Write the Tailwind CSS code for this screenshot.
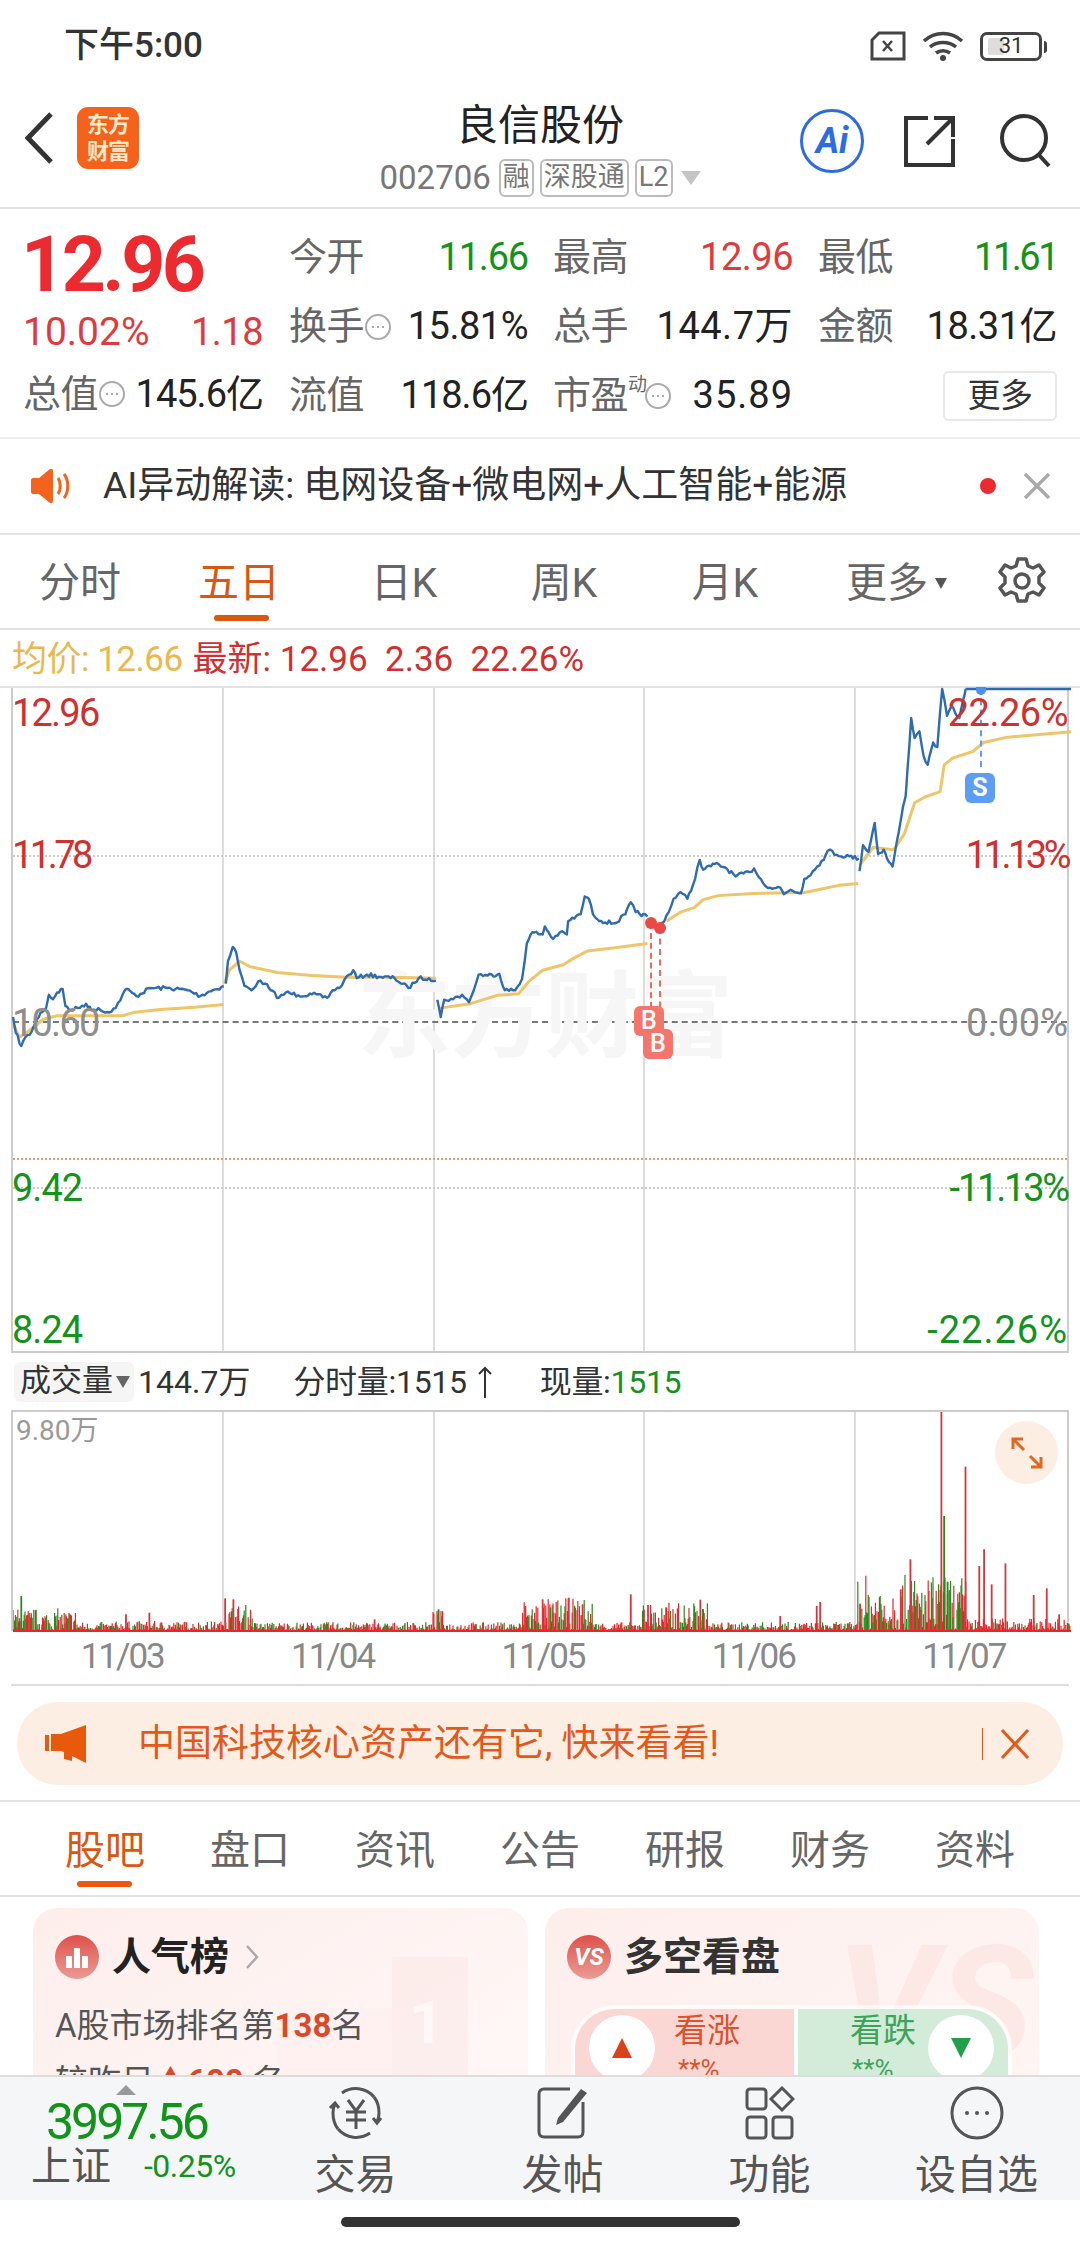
<!DOCTYPE html>
<html lang="zh-CN">
<head>
<meta charset="UTF-8">
<title>良信股份</title>
<script src="https://cdn.jsdelivr.net/npm/@tailwindcss/browser@4"></script>
</head>
<body class="bg-white">
<div class="w-[1080px] h-[2244px] overflow-hidden flex flex-col bg-white text-[#222] font-[Roboto,'Noto_Sans_CJK_SC',sans-serif]">

  <!-- status bar -->
  <div class="h-[92px] shrink-0 flex items-center justify-between pl-[64px] pr-[38px]">
    <span class="text-[35px] font-medium text-[#333]">下午5:00</span>
    <div class="flex items-center gap-[16px]">
      <svg width="36" height="30" viewBox="0 0 36 30" fill="none" stroke="#444" stroke-width="3"><path d="M9 2h25v26H2V9z"/><path d="M13 10l9 10M22 10l-9 10" stroke-width="2.5"/></svg>
      <svg width="42" height="32" viewBox="0 0 42 32" fill="none" stroke="#444" stroke-width="3.5"><path d="M2 11c11-10 27-10 38 0M8 17c7-6 19-6 26 0M14 23c4-3 10-3 14 0"/><circle cx="21" cy="28" r="3" fill="#444" stroke="none"/></svg>
      <div class="relative w-[62px] h-[29px] rounded-[7px] border-[3px] border-[#444] flex items-center justify-center text-[22px] leading-none text-[#333]">
        <span class="absolute left-[5px] top-[3px] bottom-[3px] w-[16px] bg-[#ddd] rounded-[2px]"></span>
        <span class="relative">31</span>
        <span class="absolute -right-[8px] top-[6px] w-[3px] h-[12px] bg-[#444] rounded-r-sm"></span>
      </div>
    </div>
  </div>

  <!-- header -->
  <div class="h-[117px] shrink-0 grid grid-cols-[1fr_auto_1fr] border-b-2 border-[#e2e2e2]">
    <div class="flex items-center pl-[25px] pb-[24px] gap-[24px]">
      <svg width="28" height="52" viewBox="0 0 28 52" fill="none" stroke="#333" stroke-width="5"><path d="M26 2L3 26l23 24"/></svg>
      <div class="w-[62px] h-[62px] rounded-[11px] bg-[#f4621c] flex flex-col items-center justify-center text-[#ffe9c9] text-[22px] leading-[27px] font-bold tracking-[-1px]"><span>东方</span><span>财富</span></div>
    </div>
    <div class="flex flex-col items-center pt-[8px]">
      <div class="text-[42px] leading-[52px] text-[#222]">良信股份</div>
      <div class="flex items-center text-[#777] mt-[7px]">
        <span class="text-[33px] leading-[38px]">002706</span>
        <span class="ml-[8px] h-[38px] px-[2px] border-2 border-[#bbb] rounded-[6px] text-[27px] leading-[32px]">融</span>
        <span class="ml-[6px] h-[38px] px-[2px] border-2 border-[#bbb] rounded-[6px] text-[27px] leading-[32px]">深股通</span>
        <span class="ml-[6px] h-[38px] px-[2px] border-2 border-[#bbb] rounded-[6px] text-[27px] leading-[32px]">L2</span>
        <svg class="ml-[8px]" width="20" height="14" viewBox="0 0 20 14"><path d="M0 0h20L10 14z" fill="#c4c4c4"/></svg>
      </div>
    </div>
    <div class="flex items-center justify-end pr-[28px] pb-[18px]">
      <div class="w-[64px] h-[64px] rounded-full border-[3px] border-[#2d6be4] flex items-center justify-center text-[#2d6be4] text-[36px] font-bold italic leading-none">Ai</div>
      <svg class="ml-[40px]" width="52" height="52" viewBox="0 0 52 52" fill="none" stroke="#333" stroke-width="4"><path d="M24 3H2v47h47V24"/><path d="M23 29L49 3M30 3h19v19" /></svg>
      <svg class="ml-[44px]" width="52" height="54" viewBox="0 0 52 54" fill="none" stroke="#333" stroke-width="4"><circle cx="24" cy="24" r="22"/><path d="M39 41l10 11"/></svg>
    </div>
  </div>

  <!-- quote -->
  <div class="h-[230px] shrink-0 border-b-2 border-[#eee] flex pl-[23px] pt-[14px] text-[38px] tracking-[-0.5px]">
    <div class="w-[240px] shrink-0 flex flex-col">
      <div class="h-[70px] text-[77px] leading-[70px] font-bold text-[#ec2b30] tracking-[-3.5px] mt-[7px] -mb-[7px] -ml-[2px]">12.96</div>
      <div class="h-[70px] flex justify-between items-end pb-[2px] text-[#e23a3c]"><span class="text-[39px] tracking-[0px]">10.02%</span><span>1.18</span></div>
      <div class="h-[60px] flex items-center justify-between pt-[2px]">
        <span class="flex items-center text-[#666]">总值<svg class="ml-[1px]" width="26" height="26" viewBox="0 0 26 26" fill="none" stroke="#aaa" stroke-width="2"><circle cx="13" cy="13" r="12"/><path d="M7 13h2M12 13h2M17 13h2"/></svg></span><span class="tracking-[-1px]">145.6亿</span>
      </div>
    </div>
    <div class="ml-[26px] w-[768px] grid grid-cols-[239px_240px_239px] gap-x-[25px] grid-rows-[69px_69px_69px]">
      <div class="flex items-center justify-between"><span class="text-[#666]">今开</span><span class="text-[#12931a] tracking-[-1.2px]">11.66</span></div>
      <div class="flex items-center justify-between"><span class="text-[#666]">最高</span><span class="text-[#e23a3c]">12.96</span></div>
      <div class="flex items-center justify-between"><span class="text-[#666]">最低</span><span class="text-[#12931a] tracking-[-2.5px]">11.61</span></div>
      <div class="flex items-center justify-between"><span class="flex items-center text-[#666]">换手<svg class="ml-[1px]" width="26" height="26" viewBox="0 0 26 26" fill="none" stroke="#aaa" stroke-width="2"><circle cx="13" cy="13" r="12"/><path d="M7 13h2M12 13h2M17 13h2"/></svg></span><span>15.81%</span></div>
      <div class="flex items-center justify-between"><span class="text-[#666]">总手</span><span class="tracking-[0.5px]">144.7万</span></div>
      <div class="flex items-center justify-between"><span class="text-[#666]">金额</span><span>18.31亿</span></div>
      <div class="flex items-center justify-between"><span class="text-[#666]">流值</span><span class="tracking-[-1px]">118.6亿</span></div>
      <div class="flex items-center justify-between"><span class="flex items-center text-[#666]">市盈<span class="text-[19px] leading-none self-start mt-[8px]">动</span><svg class="-ml-[2px]" width="26" height="26" viewBox="0 0 26 26" fill="none" stroke="#aaa" stroke-width="2"><circle cx="13" cy="13" r="12"/><path d="M7 13h2M12 13h2M17 13h2"/></svg></span><span class="tracking-[1px]">35.89</span></div>
      <div class="flex items-center justify-end"><button class="w-[114px] h-[50px] border-2 border-[#e8e8e8] rounded-[6px] text-[33px] leading-none text-[#333]">更多</button></div>
    </div>
  </div>

  <!-- AI notice -->
  <div class="h-[96px] shrink-0 border-b-2 border-[#e2e2e2] flex items-center pl-[31px] pr-[29px]">
    <svg width="42" height="34" viewBox="0 0 42 34"><path d="M0 11c0-1 1-2 2-2h6L19 0c1-1 3 0 3 2v30c0 2-2 3-3 2L8 25H2c-1 0-2-1-2-2z" fill="#f4621c"/><path d="M27 9c3 4 3 12 0 16M33 5c5 6 5 18 0 24" fill="none" stroke="#f4621c" stroke-width="3"/></svg>
    <span class="ml-[30px] text-[37px] text-[#333]">AI异动解读: 电网设备+微电网+人工智能+能源</span>
    <span class="ml-auto w-[16px] h-[16px] rounded-full bg-[#ec2b30]"></span>
    <svg class="ml-[27px]" width="28" height="28" viewBox="0 0 28 28" stroke="#aaa" stroke-width="3.5"><path d="M2 2l24 24M26 2L2 26"/></svg>
  </div>

  <!-- period tabs -->
  <div class="h-[95px] shrink-0 border-b-2 border-[#e2e2e2] flex text-[41px] text-[#666] leading-none">
    <div class="w-[160px] flex items-center justify-center pt-[3px]">分时</div>
    <div class="relative w-[158px] flex items-center justify-center pt-[3px] text-[#d9570f]">五日<span class="absolute bottom-[7px] left-[54px] w-[55px] h-[6px] rounded-full bg-[#d9570f]"></span></div>
    <div class="w-[172px] flex items-center justify-center pt-[3px]">日K</div>
    <div class="w-[148px] flex items-center justify-center pt-[3px]">周K</div>
    <div class="w-[174px] flex items-center justify-center pt-[3px]">月K</div>
    <div class="w-[159px] flex items-center pl-[34px] pt-[3px]">更多<svg class="ml-[7px]" width="12" height="12" viewBox="0 0 12 12"><path d="M0 1h12L6 12z" fill="#555"/></svg></div>
    <div class="flex items-center pl-[26px] pb-[2px]">
      <svg width="50" height="50" viewBox="0 0 50 50" fill="none" stroke="#555" stroke-width="3.5" stroke-linejoin="round"><path d="M21 3h8l2 7 5 2 6-3 5 7-5 5v6l5 5-5 7-6-3-5 2-2 7h-8l-2-7-5-2-6 3-5-7 5-5v-6l-5-5 5-7 6 3 5-2z"/><circle cx="25" cy="25" r="7"/></svg>
    </div>
  </div>

  <!-- legend line -->
  <div class="h-[58px] shrink-0 border-b-2 border-[#e2e2e2] flex items-center pl-[12px] pt-[4px] text-[35px] whitespace-pre">
    <span class="text-[#eab84f] tracking-[-0.5px]">均价: 12.66</span><span class="ml-[10px] text-[#d0302f]">最新: 12.96  2.36  22.26%</span>
  </div>

  <!-- price chart -->
  <div class="relative h-[665px] shrink-0 mx-[11px] border-x-2 border-b-2 border-[#ccc]">
    <div class="absolute inset-0 grid grid-cols-5 divide-x-2 divide-[#ddd]"><div></div><div></div><div></div><div></div><div></div></div>
    <div class="absolute left-0 right-0 top-[167px] border-t-2 border-dotted border-[#ccc]"></div>
    <div class="absolute left-0 right-0 top-[333px] border-t-2 border-dashed border-[#777]"></div>
    <div class="absolute left-0 right-0 top-[470px] border-t-2 border-dotted border-[#e79b6c]"></div>
    <div class="absolute left-0 right-0 top-[499px] border-t-2 border-dotted border-[#ccc]"></div>
    <div class="absolute left-[344px] top-[275px] text-[94px] leading-[110px] font-bold text-[#f6f6f6] whitespace-nowrap">东方财富</div>
    <svg class="absolute -left-[11px] -top-[8px] w-[1080px] h-[700px]" viewBox="0 0 1568 1568" preserveAspectRatio="none" fill="none" stroke-linejoin="round">
      <g stroke="#f0c468" stroke-width="3">
        <polyline vector-effect="non-scaling-stroke" points="16,770 25,800 40,785 60,760 80,752 120,752 175,752 190,745 230,738 280,733 322,727"/>
        <polyline vector-effect="non-scaling-stroke" points="323,680 330,650 345,630 360,642 400,655 450,662 500,666 560,666 630,668"/>
        <polyline vector-effect="non-scaling-stroke" points="635,735 680,725 720,706 750,703 765,675 785,650 815,638 830,623 850,607 890,600 937,590"/>
        <polyline vector-effect="non-scaling-stroke" points="965,540 985,520 1005,510 1018,492 1040,483 1090,478 1165,476 1190,468 1215,460 1243,456"/>
        <polyline vector-effect="non-scaling-stroke" points="1245,415 1265,375 1295,380 1310,345 1325,275 1340,262 1362,250 1368,190 1380,175 1410,160 1425,140 1460,128 1552,116"/>
      </g>
      <g id="price" stroke="#2f6bb0" stroke-width="2.4">
        <polyline vector-effect="non-scaling-stroke" points="16,755 20,790 28,820 34,800 40,795 48,770 56,745 64,735 68,705 74,715 80,700 88,692 92,730 100,740 110,735 122,725 130,740 140,735 150,745 165,735 175,705 180,692 195,708 215,690 240,690 270,695 288,708 300,698 322,686"/>
        <polyline vector-effect="non-scaling-stroke" points="325,680 328,630 335,598 340,610 345,650 352,685 362,695 372,675 382,680 390,695 402,712 412,700 430,706 450,704 472,712 480,695 490,690 497,672 510,650 515,668 530,660 550,665 570,668 590,690 605,668 620,668 630,674"/>
        <polyline vector-effect="non-scaling-stroke" points="632,716 637,755 642,716 655,715 668,705 678,722 688,680 692,660 705,662 722,658 730,695 745,695 755,670 762,590 770,565 785,570 788,552 800,580 810,565 820,570 822,540 840,525 846,485 852,490 858,525 870,540 890,545 905,525 913,498 920,520 937,530"/>
        <polyline vector-effect="non-scaling-stroke" points="940,545 948,555 958,545 968,520 975,490 985,475 995,490 1003,460 1013,403 1018,425 1035,412 1050,420 1065,440 1085,430 1092,422 1105,455 1115,465 1130,465 1135,480 1145,470 1160,478 1165,445 1180,425 1190,405 1202,380 1212,392 1230,395 1244,400"/>
        <polyline vector-effect="non-scaling-stroke" points="1245,428 1250,370 1258,385 1267,320 1272,390 1280,380 1285,400 1293,418 1302,340 1308,285 1312,260 1320,85 1325,130 1332,115 1338,170 1344,190 1352,140 1358,150 1365,20 1372,80 1378,60 1390,85 1398,30 1399,20"/>
        <polyline vector-effect="non-scaling-stroke" points="1399,20 1552,20"/>
      </g>
    </svg>
    <!-- buy and sell marks -->
    <span class="absolute left-[637px] top-[235px] h-[85px] border-l-2 border-dashed border-[#f4655c]"></span>
    <span class="absolute left-[646px] top-[240px] h-[90px] border-l-2 border-dashed border-[#f4655c]"></span>
    <span class="absolute left-[632px] top-[229px] w-[12px] h-[12px] rounded-full bg-[#ea4a45]"></span>
    <span class="absolute left-[641px] top-[234px] w-[12px] h-[12px] rounded-full bg-[#ea4a45]"></span>
    <span class="absolute left-[621px] top-[318px] w-[30px] h-[30px] rounded-[6px] bg-[#f4756c] text-white text-[25px] leading-[30px] text-center font-medium">B</span>
    <span class="absolute left-[630px] top-[341px] w-[30px] h-[30px] rounded-[6px] bg-[#f4756c] text-white text-[25px] leading-[30px] text-center font-medium">B</span>
    <span class="absolute left-[967px] top-[1px] h-[78px] border-l-2 border-dashed border-[#5d9ef5]"></span>
    <span class="absolute left-[963px] -top-[1px] w-[10px] h-[8px] rounded-b-full bg-[#4b8fe8]"></span>
    <span class="absolute left-[952px] top-[85px] w-[30px] h-[30px] rounded-[6px] bg-[#5d9ef5] text-white text-[25px] leading-[30px] text-center font-bold">S</span>
    <!-- axis labels -->
    <span class="absolute -left-[1px] top-[5px] text-[38px] leading-[40px] tracking-[-1.8px] text-[#d0302f]">12.96</span>
    <span class="absolute -left-[1px] top-[147px] text-[38px] leading-[40px] tracking-[-3.5px] text-[#d0302f]">11.78</span>
    <span class="absolute -left-[1px] top-[315px] text-[38px] leading-[40px] tracking-[-1.8px] text-[#8e8e8e]">10.60</span>
    <span class="absolute -left-[1px] top-[480px] text-[38px] leading-[40px] tracking-[-1px] text-[#12931a]">9.42</span>
    <span class="absolute -left-[1px] top-[622px] text-[38px] leading-[40px] tracking-[-1px] text-[#12931a]">8.24</span>
    <span class="absolute -right-[1px] top-[5px] text-[38px] leading-[40px] tracking-[-0.5px] text-[#d0302f]">22.26%</span>
    <span class="absolute -right-[1px] top-[147px] text-[38px] leading-[40px] tracking-[-3.5px] text-[#d0302f]">11.13%</span>
    <span class="absolute -right-[1px] top-[315px] text-[38px] leading-[40px] text-[#8e8e8e]">0.00%</span>
    <span class="absolute -right-[1px] top-[480px] text-[38px] leading-[40px] tracking-[-2.2px] text-[#12931a]">-11.13%</span>
    <span class="absolute -right-[1px] top-[622px] text-[38px] leading-[40px] tracking-[1px] text-[#12931a]">-22.26%</span>
  </div>

  <!-- volume header -->
  <div class="h-[57px] shrink-0 flex items-center pl-[14px] text-[32px] text-[#333]">
    <div class="w-[120px] h-[40px] rounded-[6px] bg-[#f5f5f5] flex items-center pl-[6px] text-[31px]">成交量<svg class="ml-[3px]" width="14" height="12" viewBox="0 0 14 12"><path d="M0 0h14L7 12z" fill="#666"/></svg></div>
    <span class="ml-[4px]">144.7万</span>
    <span class="ml-[43px] tracking-[-0.3px]">分时量:1515</span>
    <svg class="ml-[10px]" width="16" height="32" viewBox="0 0 16 32" fill="none" stroke="#333" stroke-width="2"><path d="M8 32V2M2 8l6-6 6 6"/></svg>
    <span class="ml-[47px] tracking-[-0.3px]">现量:<span class="text-[#12931a]">1515</span></span>
  </div>

  <!-- volume chart -->
  <div class="relative h-[221px] shrink-0 mx-[11px] border-x-2 border-t-2 border-[#ccc]">
    <div class="absolute inset-0 grid grid-cols-5 divide-x-2 divide-[#ddd]"><div></div><div></div><div></div><div></div><div></div></div>
    <svg id="vol" class="absolute inset-0 w-[1058px] h-[220px]" viewBox="0 0 1058 220"></svg>
    <span class="absolute left-[3px] top-[2px] text-[28px] leading-[34px] text-[#999]">9.80万</span>
    <div class="absolute right-[9px] top-[9px] w-[63px] h-[63px] rounded-full bg-[#fdeee4] flex items-center justify-center">
      <svg width="32" height="32" viewBox="0 0 32 32" fill="none" stroke="#e2661f" stroke-width="3"><path d="M2 12V2h10M2 2l11 11M30 20v10H20M30 30L19 19"/></svg>
    </div>
  </div>

  <!-- date axis -->
  <div class="h-[55px] shrink-0 mx-[11px] pl-[6px] border-b-2 border-[#ddd] grid grid-cols-5 text-[35px] tracking-[-2px] text-[#888] text-center leading-[52px]">
    <span>11/03</span><span>11/04</span><span>11/05</span><span>11/06</span><span>11/07</span>
  </div>

  <!-- promo banner -->
  <div class="h-[116px] shrink-0 border-b-2 border-[#e2e2e2] px-[17px] pt-[16px]">
    <div class="h-[83px] rounded-[41px] bg-[#fdeee4] flex items-center pl-[28px] pr-[33px]">
      <svg width="42" height="38" viewBox="0 0 42 38"><path d="M0 10h4v16H0zM6 9h10L41 0v38l-14-7v5l-8-2v-7l-3-1H6z" fill="#e8590c"/></svg>
      <span class="ml-[51px] text-[37px] text-[#e2591a]">中国科技核心资产还有它, 快来看看!</span>
      <span class="ml-auto w-[1px] h-[32px] bg-[#e2591a]"></span>
      <svg class="ml-[17px]" width="30" height="30" viewBox="0 0 30 30" stroke="#e2591a" stroke-width="3"><path d="M2 1l26 28M28 1L2 29"/></svg>
    </div>
  </div>

  <!-- news tabs -->
  <div class="h-[95px] shrink-0 border-b-2 border-[#e2e2e2] pl-[65px] pr-[65px] pt-[5px] flex justify-between items-center text-[40px] leading-none text-[#666]">
    <div class="relative text-[#d9570f]">股吧<span class="absolute -bottom-[16px] left-[12px] w-[55px] h-[6px] rounded-full bg-[#e8590c]"></span></div>
    <div>盘口</div><div>资讯</div><div>公告</div><div>研报</div><div>财务</div><div>资料</div>
  </div>

  <!-- cards, cut off by the bottom bar -->
  <div class="flex-1 min-h-0 overflow-hidden pl-[33px] pt-[11px] flex gap-[17px] items-start">
    <div class="relative overflow-hidden w-[495px] h-[300px] shrink-0 rounded-t-[24px] bg-gradient-to-br from-[#fdeeec] to-[#fffaf9] pl-[22px] pt-[26px]">
      <div class="absolute left-[359px] top-[49px] w-[76px] h-[200px] bg-[#fbe3e0]/40"></div>
      <div class="absolute left-[245px] top-[100px] w-[114px] h-[150px] bg-[#fdeeec]/60"></div>
      <div class="absolute left-[376px] top-[85px] text-[60px] leading-none font-bold text-white/60">1</div>
      <div class="relative flex items-center">
        <div class="w-[44px] h-[44px] rounded-full bg-gradient-to-b from-[#dd4f4b] to-[#eb9a95] flex items-end justify-center gap-[2px] pb-[11px]"><span class="w-[6px] h-[12px] bg-white"></span><span class="w-[6px] h-[20px] bg-white"></span><span class="w-[6px] h-[12px] bg-white"></span></div>
        <span class="ml-[13px] text-[39px] leading-[46px] font-bold text-[#222]">人气榜</span>
        <svg class="ml-[16px]" width="14" height="26" viewBox="0 0 14 26" fill="none" stroke="#aaa" stroke-width="2.5"><path d="M2 2l10 11L2 24"/></svg>
      </div>
      <div class="relative mt-[24px] text-[33px] leading-[44px] text-[#555]">A股市场排名第<span class="font-bold text-[#d94a2c]">138</span>名</div>
      <div class="relative mt-[12px] text-[33px] leading-[44px] text-[#555]">较昨日<span class="font-bold text-[#d94a2c]">▲600</span> 名</div>
    </div>
    <div class="relative overflow-hidden w-[494px] h-[300px] shrink-0 rounded-t-[24px] bg-gradient-to-br from-[#fdeeec] to-[#fff8f6] pl-[22px] pt-[26px]">
      <div class="absolute right-[6px] top-[16px] text-[160px] leading-none font-bold italic text-[#fce9e6]">VS</div>
      <div class="relative flex items-center">
        <div class="w-[44px] h-[44px] rounded-full bg-gradient-to-b from-[#dd4f4b] to-[#eb9a95] flex items-center justify-center text-white text-[24px] font-bold italic leading-none">VS</div>
        <span class="ml-[13px] text-[39px] leading-[46px] font-bold text-[#333]">多空看盘</span>
      </div>
      <div class="relative ml-[4px] mt-[25px] w-[441px] h-[110px] rounded-[44px] overflow-hidden flex border-4 border-white/70">
        <div class="w-[219px] bg-[#fbd7d3] relative">
          <span class="absolute left-[14px] top-[6px] w-[66px] h-[66px] rounded-full bg-white flex items-center justify-center"><svg width="22" height="22" viewBox="0 0 22 22"><path d="M11 1l10 20H1z" fill="#d9421c"/></svg></span>
          <span class="absolute left-[99px] top-[2px] text-[33px] leading-[40px] text-[#d9532c]">看涨</span>
          <span class="absolute left-[103px] top-[42px] text-[26px] leading-[36px] text-[#d9532c]">**%</span>
        </div>
        <div class="w-[4px] bg-white"></div>
        <div class="flex-1 bg-[#d3ecd9] relative">
          <span class="absolute left-[52px] top-[2px] text-[33px] leading-[40px] text-[#3fa35c]">看跌</span>
          <span class="absolute left-[54px] top-[42px] text-[26px] leading-[36px] text-[#3fa35c]">**%</span>
          <span class="absolute right-[14px] top-[6px] w-[66px] h-[66px] rounded-full bg-white flex items-center justify-center"><svg width="22" height="22" viewBox="0 0 22 22"><path d="M1 1h20L11 21z" fill="#1fa04a"/></svg></span>
        </div>
      </div>
    </div>
  </div>

  <!-- bottom bar -->
  <div class="h-[125px] shrink-0 bg-[#f5f6f8] border-t-2 border-[#ddd] flex">
    <div class="relative w-[252px] shrink-0">
      <svg class="absolute left-[116px] top-[8px]" width="20" height="10" viewBox="0 0 20 10"><path d="M10 0l10 10H0z" fill="#999"/></svg>
      <div class="absolute left-[46px] top-[19px] text-[50px] leading-[52px] tracking-[-3px] text-[#12931a]">3997.56</div>
      <div class="absolute left-[31px] top-[66px] text-[40px] leading-[48px] text-[#555]">上证</div>
      <div class="absolute left-[144px] top-[70px] text-[32px] leading-[38px] tracking-[-0.5px] text-[#12931a]">-0.25%</div>
    </div>
    <div class="flex-1 grid grid-cols-4 text-[41px] leading-[48px] text-[#555] text-center">
      <div class="flex flex-col items-center pt-[9px]">
        <svg width="60" height="54" viewBox="0 0 60 54" fill="none" stroke="#555" stroke-width="3"><path d="M44 47a24 24 0 0 1-32-4M16 7a24 24 0 0 1 32 4"/><path d="M12 43c-4-5-5-10-5-16 0-3 .5-6 2-9M48 11c4 5 5 10 5 16 0 3-.5 6-2 9"/><path d="M4 22l5-5 4 5M47 32l4 5 4-5"/><path d="M22 14l8 11 8-11M20 26h20M20 34h20M30 25v18"/></svg>
        <span class="mt-[11px]">交易</span>
      </div>
      <div class="flex flex-col items-center pt-[9px]">
        <svg width="54" height="54" viewBox="0 0 54 54" fill="none" stroke="#555" stroke-width="3"><path d="M34 3H8C5 3 3 5 3 8v38c0 3 2 5 5 5h34c3 0 5-2 5-5V16"/><path d="M22 32L45 3l6 4-24 29-7 3z" fill="#555" stroke="none"/></svg>
        <span class="mt-[11px]">发帖</span>
      </div>
      <div class="flex flex-col items-center pt-[9px]">
        <svg width="50" height="54" viewBox="0 0 50 54" fill="none" stroke="#555" stroke-width="3"><rect x="2" y="3" width="19" height="20" rx="3"/><path d="M37 2l11 11-11 11-11-11z"/><rect x="2" y="31" width="19" height="21" rx="3"/><rect x="28" y="31" width="19" height="21" rx="3"/></svg>
        <span class="mt-[11px]">功能</span>
      </div>
      <div class="flex flex-col items-center pt-[9px]">
        <svg width="54" height="54" viewBox="0 0 54 54" fill="none" stroke="#555" stroke-width="3"><circle cx="27" cy="27" r="25"/><circle cx="17" cy="27" r="2" fill="#555" stroke="none"/><circle cx="27" cy="27" r="2" fill="#555" stroke="none"/><circle cx="37" cy="27" r="2" fill="#555" stroke="none"/></svg>
        <span class="mt-[11px]">设自选</span>
      </div>
    </div>
  </div>

  <!-- home indicator -->
  <div class="h-[44px] shrink-0 flex items-start justify-center pt-[17px]"><div class="w-[399px] h-[10px] rounded-full bg-[#333]"></div></div>
</div>

<script>
var seed = 7;
function rnd() { seed = (seed * 16807) % 2147483647; return seed / 2147483647; }

// price line: roughen the traced points so it reads like tick data
document.querySelectorAll('#price polyline').forEach(function (line, n) {
  if (n == 5) return;
  var pts = line.getAttribute('points').split(' ').map(function (p) { return p.split(',').map(Number); });
  var out = [];
  for (var i = 0; i < pts.length - 1; i++) {
    var a = pts[i], b = pts[i + 1], steps = Math.max(1, Math.round((b[0] - a[0]) / 3));
    for (var s = 0; s < steps; s++) {
      var t = s / steps, j = s == 0 ? 0 : (rnd() - 0.5) * 9;
      out.push((a[0] + (b[0] - a[0]) * t).toFixed(1) + ',' + (a[1] + (b[1] - a[1]) * t + j).toFixed(1));
    }
  }
  var last = pts[pts.length - 1];
  out.push(last[0] + ',' + last[1]);
  line.setAttribute('points', out.join(' '));
});

// volume bars: the big spikes come from the picture, the rest is seeded noise
var vol = document.getElementById('vol');
var spikes = [[1364,122,'r'],[1399,287,'r'],[1426,535,'r'],[1419,585,'r'],[1457,577,'r'],[1437,640,'r'],[1320,630,'r'],[1319,565,'r'],[1305,655,'r'],[1188,693,'r'],[1183,705,'r'],[1130,735,'r'],[1014,686,'r'],[981,712,'r'],[938,702,'r'],[913,670,'r'],[843,700,'r'],[823,680,'r'],[785,685,'r'],[760,705,'r'],[541,745,'r'],[336,685,'r'],[324,682,'r'],[214,725,'r'],[180,730,'r'],[1498,672,'r'],[1517,652,'r'],[1535,730,'r'],[1246,698,'r'],[1368,435,'g'],[28,675,'g'],[634,715,'g'],[1373,632,'g']];
function envelope(x) {
  if (x < 110) return 22;
  if (x > 320 && x < 365) return 26;
  if (x > 625 && x < 645) return 20;
  if (x > 755 && x < 860) return 32;
  if (x > 925 && x < 1025) return 28;
  if (x > 1240 && x < 1400) return 55;
  if (x > 1400) return 12;
  if (x > 160 && x < 320) return 9;
  return 8;
}
var html = '';
for (var i = 0; i < 1058; i += 0.8) {
  var zx = (i + 11) * 1.452;
  var h = 2 + Math.pow(rnd(), 1.8) * envelope(zx);
  var green = rnd() < (zx > 1400 ? 0.08 : 0.4);
  html += '<line x1="' + i + '" x2="' + i + '" y1="220" y2="' + (220 - h) + '" stroke="' + (green ? '#2a8a1e' : '#e8262a') + '" stroke-width="1.2"/>';
}
spikes.forEach(function (s) {
  var x = s[0] / 1.452 - 11, y = 1370 + s[1] / 3 - 1411;
  html += '<line x1="' + x + '" x2="' + x + '" y1="220" y2="' + y + '" stroke="' + (s[2] == 'g' ? '#2a8a1e' : '#d8343a') + '" stroke-width="1.8"/>';
});
html += '<line x1="0" x2="1058" y1="219" y2="219" stroke="#e8262a" stroke-width="2"/>';
vol.innerHTML = html;
</script>
</body>
</html>
